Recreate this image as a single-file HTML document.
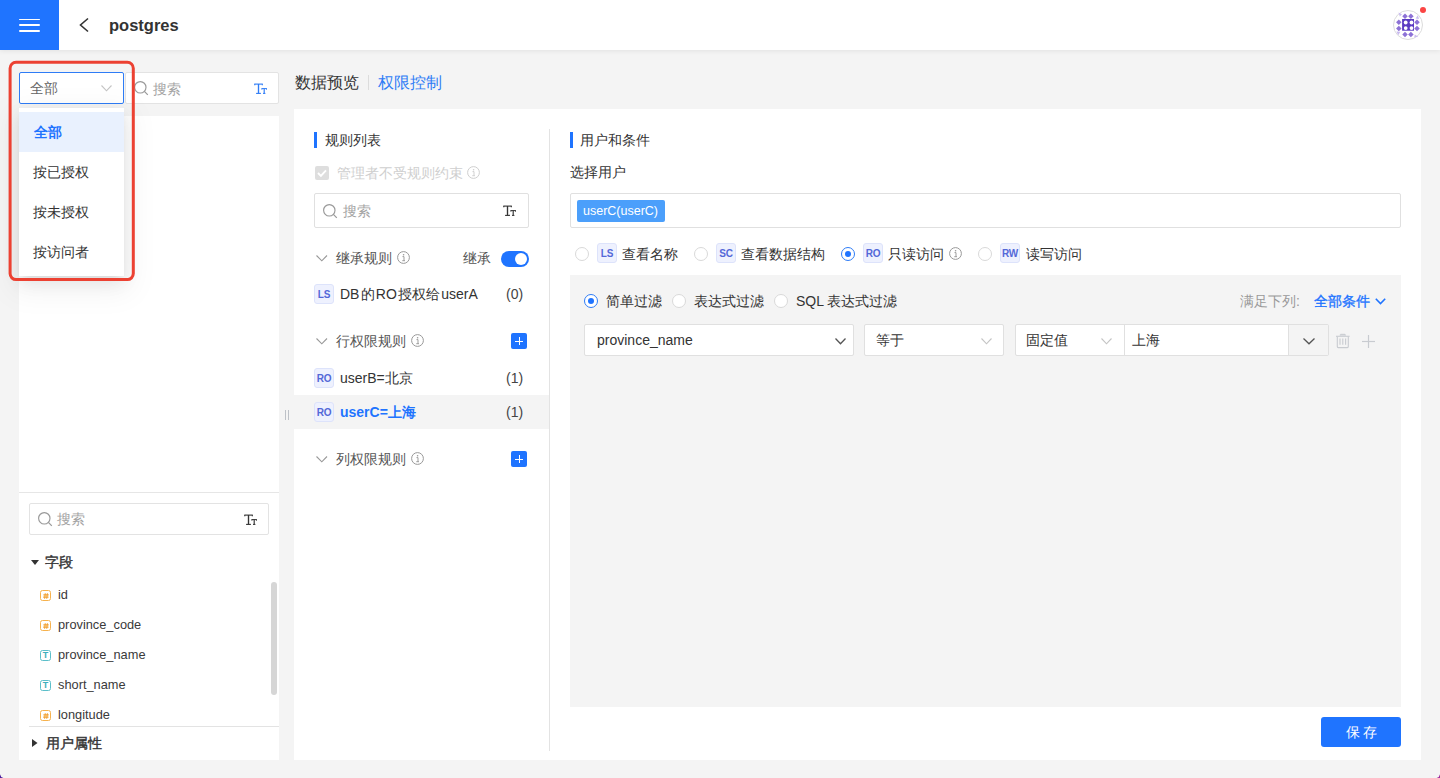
<!DOCTYPE html>
<html><head><meta charset="utf-8">
<style>
*{box-sizing:border-box;margin:0;padding:0}
html,body{width:1440px;height:778px;overflow:hidden}
body{position:relative;background:#f4f4f4;font-family:"Liberation Sans",sans-serif;font-size:14px;color:#333}
.a{position:absolute}
.t{position:absolute;white-space:nowrap;line-height:1}
.hdr{left:0;top:0;width:1440px;height:50px;background:#fff;box-shadow:0 1px 5px rgba(0,0,0,.08)}
.menu{left:0;top:0;width:59px;height:50px;background:#1f74ff}
.menu i{position:absolute;left:18.6px;width:21.2px;height:1.8px;background:#fff;border-radius:1px}
.box{position:absolute;background:#fff;border:1px solid #e3e3e3;border-radius:2px}
.panel{position:absolute;background:#fff}
.badge{position:absolute;width:20px;height:20px;background:#eef1fe;border:1px solid #dde3fb;border-radius:3px;color:#5468d8;font-weight:bold;font-size:10px;line-height:19px;text-align:center;letter-spacing:-.2px}
.radio{position:absolute;width:14px;height:14px;border:1px solid #d9d9d9;border-radius:50%;background:#fff}
.radio.on{border-color:#2e7cf6}
.radio.on:after{content:"";position:absolute;left:3px;top:3px;width:6px;height:6px;border-radius:50%;background:#1f74ff}
.plus{position:absolute;width:16px;height:16px;background:#1f74ff;border-radius:2px}
.plus:before{content:"";position:absolute;left:4px;top:7.5px;width:8px;height:1px;background:#fff}
.plus:after{content:"";position:absolute;left:7.5px;top:4px;width:1px;height:8px;background:#fff}
.bar{position:absolute;width:3px;height:16px;background:#1f74ff}
.ficon{position:absolute;width:11px;height:11px;border:1px solid #f6b24e;border-radius:2.5px;font-size:9px;line-height:9px;text-align:center;color:#f2a233;font-weight:bold}
.ficon.tx{border-color:#5cbfca;color:#3fb0bd}
svg{position:absolute;overflow:visible}
</style></head><body>

<!-- header -->
<div class="a hdr"></div>
<div class="a menu"><i style="top:18.5px"></i><i style="top:24.4px"></i><i style="top:30.2px"></i></div>
<svg style="left:79px;top:18px" width="10" height="14"><polyline points="9,0.5 1.5,7 9,13.5" fill="none" stroke="#333" stroke-width="1.6"/></svg>
<div class="t" style="left:109px;top:17px;font-size:16.5px;font-weight:bold;color:#333">postgres</div>

<!-- avatar -->
<div class="a" style="left:1393px;top:10px;width:30px;height:30px;border:1px solid #dcdcdc;border-radius:50%;background:#fff"></div>
<svg style="left:1393px;top:10px" width="30" height="30"><rect x="10.05" y="4.35" width="3.9" height="3.9" transform="rotate(45 12 6.3)" fill="#8d72d6"/><rect x="15.95" y="4.35" width="3.9" height="3.9" transform="rotate(45 17.9 6.3)" fill="#8d72d6"/><rect x="10.05" y="22.65" width="3.9" height="3.9" transform="rotate(45 12 24.6)" fill="#8d72d6"/><rect x="15.95" y="22.65" width="3.9" height="3.9" transform="rotate(45 17.9 24.6)" fill="#8d72d6"/><rect x="3.85" y="10.25" width="3.9" height="3.9" transform="rotate(45 5.8 12.2)" fill="#8d72d6"/><rect x="3.85" y="16.45" width="3.9" height="3.9" transform="rotate(45 5.8 18.4)" fill="#8d72d6"/><rect x="22.05" y="10.25" width="3.9" height="3.9" transform="rotate(45 24 12.2)" fill="#8d72d6"/><rect x="22.05" y="16.45" width="3.9" height="3.9" transform="rotate(45 24 18.4)" fill="#8d72d6"/>
<rect x="9.1" y="9" width="11.9" height="11.7" fill="#5b3bc2"/>
<circle cx="12.7" cy="12.5" r="1.9" fill="#fff"/><circle cx="18.5" cy="12.5" r="1.9" fill="#fff"/><circle cx="12.7" cy="18.1" r="1.9" fill="#fff"/><circle cx="18.5" cy="18.1" r="1.9" fill="#fff"/>
<polygon points="5.5,2.6 9,4.2 6.8,6.5" fill="#c9bbef"/><polygon points="24.8,5.2 26,9 22.6,8.4" fill="#c9bbef"/><polygon points="3.5,21.5 7.4,21.8 5.2,25.2" fill="#c9bbef"/><polygon points="21.8,24.6 25.2,26.8 21.2,27.6" fill="#c9bbef"/>
</svg>
<div class="a" style="left:1420px;top:7px;width:6px;height:6px;border-radius:50%;background:#fb4544"></div>

<!-- LEFT COLUMN -->
<div class="panel" style="left:19px;top:116px;width:260px;height:644px"></div>
<div class="a" style="left:19px;top:492px;width:260px;height:1px;background:#e6e6e6"></div>
<!-- top select -->
<div class="box" style="left:19px;top:72px;width:105px;height:32px;border-color:#2e7cf6"></div>
<div class="t" style="left:30px;top:81px;color:#666">全部</div>
<svg style="left:101px;top:85px" width="11" height="7"><polyline points="0.5,0.5 5.5,5.8 10.5,0.5" fill="none" stroke="#c4c4c4" stroke-width="1.1"/></svg>
<!-- top search -->
<div class="box" style="left:125px;top:72px;width:154px;height:32px;border-color:#e3e3e3"></div>
<svg style="left:133.5px;top:80.7px" width="15" height="15"><circle cx="6.3" cy="6.3" r="5.7" fill="none" stroke="#999" stroke-width="1.15"/><line x1="10.4" y1="10.4" x2="13.8" y2="13.8" stroke="#999" stroke-width="1.2"/></svg>
<div class="t" style="left:153px;top:81.5px;color:#a3a3a3">搜索</div>
<svg style="left:254px;top:82.5px" width="14" height="12"><g fill="none" stroke="#2e7cf6"><path d="M0.4,1.1 H8.7" stroke-width="1.1"/><path d="M0.8,0.9 V2.3 M8.3,0.9 V2.3" stroke-width="1"/><path d="M4.5,1 V10.4" stroke-width="1.35"/><path d="M2.1,10.4 H6.9" stroke-width="1.1"/><path d="M7.6,5.6 H12.8" stroke-width="1"/><path d="M7.9,5.4 V6.7 M12.5,5.4 V6.7" stroke-width="0.9"/><path d="M10.2,5.6 V10.4" stroke-width="1.15"/><path d="M9,10.4 H11.4" stroke-width="1"/></g></svg>

<!-- bottom search -->
<div class="box" style="left:29px;top:503px;width:240px;height:32px"></div>
<svg style="left:37.5px;top:511.7px" width="15" height="15"><circle cx="6.3" cy="6.3" r="5.7" fill="none" stroke="#999" stroke-width="1.15"/><line x1="10.4" y1="10.4" x2="13.8" y2="13.8" stroke="#999" stroke-width="1.2"/></svg>
<div class="t" style="left:57px;top:512px;color:#a3a3a3">搜索</div>
<svg style="left:244px;top:514px" width="14" height="12"><g fill="none" stroke="#333"><path d="M0.4,1.1 H8.7" stroke-width="1.1"/><path d="M0.8,0.9 V2.3 M8.3,0.9 V2.3" stroke-width="1"/><path d="M4.5,1 V10.4" stroke-width="1.35"/><path d="M2.1,10.4 H6.9" stroke-width="1.1"/><path d="M7.6,5.6 H12.8" stroke-width="1"/><path d="M7.9,5.4 V6.7 M12.5,5.4 V6.7" stroke-width="0.9"/><path d="M10.2,5.6 V10.4" stroke-width="1.15"/><path d="M9,10.4 H11.4" stroke-width="1"/></g></svg>

<!-- fields -->
<svg style="left:31px;top:560px" width="9" height="5"><polygon points="0,0 8,0 4,5" fill="#333"/></svg>
<div class="t" style="left:45px;top:555px;-webkit-text-stroke:0.4px #333">字段</div>
<div class="ficon" style="left:40px;top:590px"><svg style="left:2px;top:2px" width="6" height="6"><path d="M2.3,0.3 L1.6,5.7 M4.4,0.3 L3.7,5.7 M0.4,1.9 H5.7 M0.2,4.1 H5.5" stroke="#f2a233" stroke-width="1.1" fill="none"/></svg></div><div class="t" style="left:58px;top:589px;font-size:12.8px;color:#3a3a3a">id</div>
<div class="ficon" style="left:40px;top:620px"><svg style="left:2px;top:2px" width="6" height="6"><path d="M2.3,0.3 L1.6,5.7 M4.4,0.3 L3.7,5.7 M0.4,1.9 H5.7 M0.2,4.1 H5.5" stroke="#f2a233" stroke-width="1.1" fill="none"/></svg></div><div class="t" style="left:58px;top:619px;font-size:12.8px;color:#3a3a3a">province_code</div>
<div class="ficon tx" style="left:40px;top:650px">T</div><div class="t" style="left:58px;top:649px;font-size:12.8px;color:#3a3a3a">province_name</div>
<div class="ficon tx" style="left:40px;top:680px">T</div><div class="t" style="left:58px;top:679px;font-size:12.8px;color:#3a3a3a">short_name</div>
<div class="ficon" style="left:40px;top:710px"><svg style="left:2px;top:2px" width="6" height="6"><path d="M2.3,0.3 L1.6,5.7 M4.4,0.3 L3.7,5.7 M0.4,1.9 H5.7 M0.2,4.1 H5.5" stroke="#f2a233" stroke-width="1.1" fill="none"/></svg></div><div class="t" style="left:58px;top:709px;font-size:12.8px;color:#3a3a3a">longitude</div>
<div class="a" style="left:271px;top:582px;width:6px;height:113px;border-radius:3px;background:#d6d6d6"></div>
<div class="a" style="left:19px;top:725px;width:260px;height:35px;background:#fff"></div>
<div class="a" style="left:29px;top:726px;width:250px;height:1px;background:#e3e3e3"></div>
<svg style="left:32px;top:739px" width="6" height="8"><polygon points="0,0 5.5,4 0,8" fill="#333"/></svg>
<div class="t" style="left:46px;top:736px;-webkit-text-stroke:0.4px #333">用户属性</div>

<!-- dropdown -->
<div class="a" style="left:19px;top:108px;width:105px;height:168px;background:#fff;box-shadow:0 3px 6px -4px rgba(0,0,0,.12),0 6px 16px 0 rgba(0,0,0,.08),0 9px 28px 8px rgba(0,0,0,.05)"></div>
<div class="a" style="left:19px;top:112px;width:105px;height:40px;background:#e9f1fe"></div>
<div class="t" style="left:33.6px;top:125px;color:#1f74ff;font-weight:bold">全部</div>
<div class="t" style="left:33px;top:165px">按已授权</div>
<div class="t" style="left:33px;top:205px">按未授权</div>
<div class="t" style="left:33px;top:245px">按访问者</div>
<svg style="left:0;top:0" width="150" height="300"><rect x="10.1" y="62.2" width="123.2" height="217.4" rx="6" fill="none" stroke="#ec4132" stroke-width="3"/></svg>

<!-- TABS -->
<div class="t" style="left:295px;top:75px;font-size:16px;color:#333">数据预览</div>
<div class="a" style="left:368px;top:75px;width:1px;height:15px;background:#dcdcdc"></div>
<div class="t" style="left:378px;top:75px;font-size:16px;color:#2e7cf6">权限控制</div>

<!-- MAIN PANEL -->
<div class="panel" style="left:294px;top:109px;width:1127px;height:651px"></div>
<div class="a" style="left:549px;top:129px;width:1px;height:622px;background:#e3e3e3"></div>
<div class="a" style="left:285px;top:410px;width:1px;height:10px;background:#bdc1c7"></div><div class="a" style="left:288px;top:410px;width:1px;height:10px;background:#bdc1c7"></div>

<!-- middle column -->
<div class="bar" style="left:314px;top:132px"></div>
<div class="t" style="left:325px;top:133px">规则列表</div>
<div class="a" style="left:315px;top:166px;width:14px;height:14px;background:#dedede;border-radius:2px"></div>
<svg style="left:315px;top:166px" width="14" height="14"><polyline points="3,7 5.9,9.9 11,4.4" fill="none" stroke="#fff" stroke-width="1.9"/></svg>
<div class="t" style="left:337px;top:165.5px;color:#cfcfcf">管理者不受规则约束</div>
<svg style="left:467px;top:166px" width="13" height="13"><circle cx="6.5" cy="6.5" r="5.9" fill="none" stroke="#cfcfcf" stroke-width="1"/><circle cx="6.6" cy="3.7" r="0.8" fill="#cfcfcf"/><path d="M5.5,5.6 H7 V9.7 M5.3,9.7 H8" fill="none" stroke="#cfcfcf" stroke-width="0.95"/></svg>

<div class="box" style="left:314px;top:193px;width:215px;height:35px;border-color:#e0e0e0"></div>
<svg style="left:322.5px;top:203.7px" width="15" height="15"><circle cx="6.3" cy="6.3" r="5.7" fill="none" stroke="#999" stroke-width="1.15"/><line x1="10.4" y1="10.4" x2="13.8" y2="13.8" stroke="#999" stroke-width="1.2"/></svg>
<div class="t" style="left:343px;top:204px;color:#a3a3a3">搜索</div>
<svg style="left:502.8px;top:205px" width="14" height="12"><g fill="none" stroke="#333"><path d="M0.4,1.1 H8.7" stroke-width="1.1"/><path d="M0.8,0.9 V2.3 M8.3,0.9 V2.3" stroke-width="1"/><path d="M4.5,1 V10.4" stroke-width="1.35"/><path d="M2.1,10.4 H6.9" stroke-width="1.1"/><path d="M7.6,5.6 H12.8" stroke-width="1"/><path d="M7.9,5.4 V6.7 M12.5,5.4 V6.7" stroke-width="0.9"/><path d="M10.2,5.6 V10.4" stroke-width="1.15"/><path d="M9,10.4 H11.4" stroke-width="1"/></g></svg>

<!-- inherit -->
<svg style="left:316px;top:255px" width="12" height="7"><polyline points="0.5,0.5 5.8,5.8 11,0.5" fill="none" stroke="#999" stroke-width="1.1"/></svg>
<div class="t" style="left:336px;top:251px;color:#555">继承规则</div>
<svg style="left:397px;top:251px" width="13" height="13"><circle cx="6.5" cy="6.5" r="5.9" fill="none" stroke="#999" stroke-width="1"/><circle cx="6.6" cy="3.7" r="0.8" fill="#999"/><path d="M5.5,5.6 H7 V9.7 M5.3,9.7 H8" fill="none" stroke="#999" stroke-width="0.95"/></svg>
<div class="t" style="left:463px;top:251px;color:#555">继承</div>
<div class="a" style="left:501px;top:251px;width:28px;height:16px;border-radius:8px;background:#1f74ff"></div>
<div class="a" style="left:515px;top:253px;width:12px;height:12px;border-radius:50%;background:#fff"></div>

<div class="badge" style="left:314px;top:284px">LS</div>
<div class="t" style="left:340px;top:287px">DB<span style="margin-left:1.2px"></span>的<span style="margin-left:1.2px"></span>RO<span style="margin-left:1.2px"></span>授权给<span style="margin-left:1.2px"></span>userA</div>
<div class="t" style="left:506px;top:287px;color:#444">(0)</div>

<!-- row perms -->
<svg style="left:316px;top:338px" width="12" height="7"><polyline points="0.5,0.5 5.8,5.8 11,0.5" fill="none" stroke="#999" stroke-width="1.1"/></svg>
<div class="t" style="left:336px;top:334px;color:#555">行权限规则</div>
<svg style="left:411px;top:334px" width="13" height="13"><circle cx="6.5" cy="6.5" r="5.9" fill="none" stroke="#999" stroke-width="1"/><circle cx="6.6" cy="3.7" r="0.8" fill="#999"/><path d="M5.5,5.6 H7 V9.7 M5.3,9.7 H8" fill="none" stroke="#999" stroke-width="0.95"/></svg>
<div class="plus" style="left:511px;top:333px"></div>

<div class="badge" style="left:314px;top:368px">RO</div>
<div class="t" style="left:340px;top:371px">userB=北京</div>
<div class="t" style="left:506px;top:371px;color:#444">(1)</div>

<div class="a" style="left:294px;top:395px;width:255px;height:34px;background:#f4f4f4"></div>
<div class="badge" style="left:314px;top:402px">RO</div>
<div class="t" style="left:340px;top:405px;color:#1f74ff;font-weight:bold">userC=上海</div>
<div class="t" style="left:506px;top:405px;color:#444">(1)</div>

<!-- col perms -->
<svg style="left:316px;top:456px" width="12" height="7"><polyline points="0.5,0.5 5.8,5.8 11,0.5" fill="none" stroke="#999" stroke-width="1.1"/></svg>
<div class="t" style="left:336px;top:452px;color:#555">列权限规则</div>
<svg style="left:411px;top:452px" width="13" height="13"><circle cx="6.5" cy="6.5" r="5.9" fill="none" stroke="#999" stroke-width="1"/><circle cx="6.6" cy="3.7" r="0.8" fill="#999"/><path d="M5.5,5.6 H7 V9.7 M5.3,9.7 H8" fill="none" stroke="#999" stroke-width="0.95"/></svg>
<div class="plus" style="left:511px;top:451px"></div>

<!-- RIGHT COLUMN -->
<div class="bar" style="left:570px;top:132px"></div>
<div class="t" style="left:580px;top:133px">用户和条件</div>
<div class="t" style="left:570px;top:165px">选择用户</div>
<div class="box" style="left:570px;top:193px;width:831px;height:35px;border-color:#e0e0e0"></div>
<div class="a" style="left:577px;top:200px;width:88px;height:22px;border-radius:2px;background:#4b9ffb"></div>
<div class="t" style="left:583px;top:205px;color:#fff;font-size:12.5px">userC(userC)</div>

<div class="radio" style="left:575px;top:247px"></div>
<div class="badge" style="left:597px;top:243px">LS</div>
<div class="t" style="left:622px;top:247px">查看名称</div>
<div class="radio" style="left:694px;top:247px"></div>
<div class="badge" style="left:716px;top:243px">SC</div>
<div class="t" style="left:741px;top:247px">查看数据结构</div>
<div class="radio on" style="left:841px;top:247px"></div>
<div class="badge" style="left:863px;top:243px">RO</div>
<div class="t" style="left:888px;top:247px">只读访问</div>
<svg style="left:949px;top:247px" width="13" height="13"><circle cx="6.5" cy="6.5" r="5.9" fill="none" stroke="#999" stroke-width="1"/><circle cx="6.6" cy="3.7" r="0.8" fill="#999"/><path d="M5.5,5.6 H7 V9.7 M5.3,9.7 H8" fill="none" stroke="#999" stroke-width="0.95"/></svg>
<div class="radio" style="left:978px;top:247px"></div>
<div class="badge" style="left:1000px;top:243px">RW</div>
<div class="t" style="left:1026px;top:247px">读写访问</div>

<!-- filter area -->
<div class="a" style="left:570px;top:275px;width:831px;height:432px;background:#f4f4f4"></div>
<div class="radio on" style="left:584px;top:294px"></div>
<div class="t" style="left:606px;top:294px">简单过滤</div>
<div class="radio" style="left:672px;top:294px"></div>
<div class="t" style="left:694px;top:294px">表达式过滤</div>
<div class="radio" style="left:774px;top:294px"></div>
<div class="t" style="left:796px;top:294px">SQL 表达式过滤</div>
<div class="t" style="left:1240px;top:294px;color:#999">满足下列:</div>
<div class="t" style="left:1314px;top:294px;color:#1f74ff;-webkit-text-stroke:0.35px #1f74ff">全部条件</div>
<svg style="left:1375px;top:298px" width="11" height="7"><polyline points="0.8,0.8 5.5,5.5 10.2,0.8" fill="none" stroke="#1f74ff" stroke-width="1.6"/></svg>

<div class="box" style="left:584px;top:324px;width:270px;height:32px;border-color:#e0e0e0"></div>
<div class="t" style="left:597px;top:333px">province_name</div>
<svg style="left:835px;top:338px" width="11" height="7"><polyline points="0.5,0.5 5.5,5.8 10.5,0.5" fill="none" stroke="#555" stroke-width="1.3"/></svg>

<div class="box" style="left:864px;top:324px;width:140px;height:32px;border-color:#e0e0e0"></div>
<div class="t" style="left:876px;top:333px">等于</div>
<svg style="left:981px;top:338px" width="11" height="7"><polyline points="0.5,0.5 5.5,5.8 10.5,0.5" fill="none" stroke="#c4c4c4" stroke-width="1.1"/></svg>

<div class="box" style="left:1015px;top:324px;width:314px;height:32px;border-color:#e0e0e0"></div>
<div class="a" style="left:1124px;top:325px;width:1px;height:30px;background:#e0e0e0"></div>
<div class="a" style="left:1288px;top:325px;width:40px;height:30px;background:#f4f4f4;border-left:1px solid #e0e0e0"></div>
<div class="t" style="left:1026px;top:333px">固定值</div>
<svg style="left:1101px;top:338px" width="11" height="7"><polyline points="0.5,0.5 5.5,5.8 10.5,0.5" fill="none" stroke="#c4c4c4" stroke-width="1.1"/></svg>
<div class="t" style="left:1132px;top:333px">上海</div>
<svg style="left:1303px;top:338px" width="12" height="7"><polyline points="0.5,0.5 6,5.8 11.5,0.5" fill="none" stroke="#555" stroke-width="1.3"/></svg>
<!-- trash -->
<svg style="left:1336px;top:334px" width="14" height="14"><path d="M4.2,1.6 V0.9 Q4.2,0.3 4.8,0.3 H8.8 Q9.4,0.3 9.4,0.9 V1.6" fill="#c8cbd0" stroke="#c8cbd0" stroke-width="0.8"/><line x1="0" y1="2.3" x2="13.6" y2="2.3" stroke="#c8cbd0" stroke-width="1.1"/><path d="M1.3,2.6 V12.6 Q1.3,13.6 2.3,13.6 H11.3 Q12.3,13.6 12.3,12.6 V2.6" fill="none" stroke="#c8cbd0" stroke-width="1.1"/><line x1="4" y1="4.6" x2="4" y2="10.8" stroke="#c8cbd0" stroke-width="1.1"/><line x1="6.8" y1="4.6" x2="6.8" y2="10.8" stroke="#c8cbd0" stroke-width="1.1"/><line x1="9.6" y1="4.6" x2="9.6" y2="10.8" stroke="#c8cbd0" stroke-width="1.1"/></svg>
<svg style="left:1362px;top:335px" width="14" height="14"><line x1="0" y1="6.5" x2="13" y2="6.5" stroke="#c8cbd0" stroke-width="1.2"/><line x1="6.5" y1="0" x2="6.5" y2="13" stroke="#c8cbd0" stroke-width="1.2"/></svg>

<!-- save -->
<div class="a" style="left:1321px;top:717px;width:80px;height:30px;border-radius:3px;background:#1f74ff"></div>
<div class="t" style="left:1345.5px;top:725px;color:#fff;letter-spacing:3px">保存</div>

<svg style="left:0;top:770px" width="8" height="8"><path d="M0,4.2 Q0.6,7.4 3.4,8 L0,8 Z" fill="#4a1d9c"/></svg>
<svg style="left:1432px;top:770px" width="8" height="8"><path d="M8,4.2 Q7.4,7.4 4.6,8 L8,8 Z" fill="#9e2a9c"/></svg>
</body></html>
